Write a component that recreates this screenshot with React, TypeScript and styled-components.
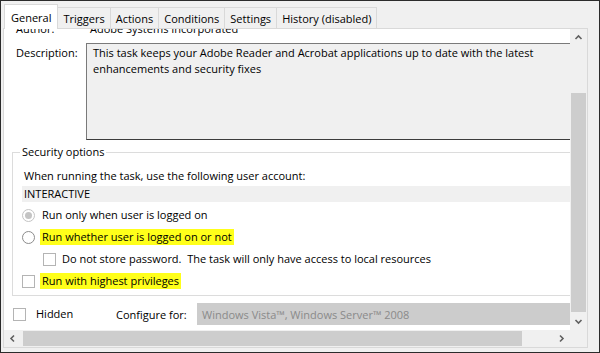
import React from "react";
import styled, { createGlobalStyle } from "styled-components";

const Global = createGlobalStyle`
  html, body { margin: 0; padding: 0; background: #fff; }
  body {
    font-family: "Open Sans", "Noto Sans", sans-serif;
    font-size: 11px;
    color: #000;
  }
  * { box-sizing: border-box; }
`;

const Frame = styled.div`
  width: 600px;
  height: 353px;
  border: 1px solid #2b2b2b;
  background: #f0f0f0;
  padding: 3px 11px 4px 2px;
  display: flex;
  flex-direction: column;
`;

const TabStrip = styled.div`
  height: 25px;
  display: flex;
  align-items: flex-start;
  position: relative;
  z-index: 1;
`;

const Tab = styled.div<{ $active?: boolean }>`
  margin-top: ${(p) => (p.$active ? 0 : 3)}px;
  height: ${(p) => (p.$active ? 25 : 21)}px;
  padding: 0 ${(p) => (p.$active ? 6 : 5)}px;
  margin-left: -1px;
  background: ${(p) => (p.$active ? "#fff" : "#f0f0f0")};
  border: 1px solid #d9d9d9;
  border-bottom: none;
  display: flex;
  align-items: center;
  white-space: nowrap;
  &:first-child { margin-left: 1px; }
`;

const Panel = styled.div`
  flex: 1;
  min-height: 0;
  margin-top: -1px;
  background: #fff;
  border: 1px solid #d9d9d9;
  display: grid;
  grid-template-columns: 1fr 17px;
  grid-template-rows: 1fr 17px;
`;

const Viewport = styled.div`
  overflow: hidden;
  min-width: 0;
  min-height: 0;
`;

const Content = styled.div`
  width: 640px;
  margin-top: -10px;
`;

const FieldRow = styled.div<{ $gap?: number }>`
  display: flex;
  align-items: flex-start;
  padding-left: 12px;
  line-height: 16px;
  margin-top: ${(p) => p.$gap ?? 0}px;
`;

const FieldLabel = styled.div<{ $w: number }>`
  width: ${(p) => p.$w}px;
  flex: none;
  padding-top: 2px;
`;

const FieldValue = styled.div`
  padding-top: 2px;
`;

const TextBox = styled.div`
  width: 520px;
  height: 97px;
  background: #f0f0f0;
  border: 1px solid #7a7a7a;
  border-bottom-color: #3c3c3c;
  padding: 1px 6px;
  line-height: 16px;
`;

const Group = styled.fieldset`
  margin: 4px 0 0 8px;
  width: 620px;
  border: 1px solid #dcdcdc;
  padding: 8px 0 6px 9px;
  line-height: 16px;
`;

const Legend = styled.legend`
  padding: 0 2px;
  margin-left: -2px;
  line-height: 16px;
`;

const AccountLabel = styled.div`
  padding-left: 2px;
`;

const AccountBox = styled.div`
  margin-top: 2px;
  height: 16px;
  background: #f0f0f0;
  padding-left: 2px;
  line-height: 16px;
`;

const Options = styled.div`
  margin-top: 5px;
  display: flex;
  flex-direction: column;
  gap: 6px;
`;

const OptionRow = styled.div<{ $indent?: number }>`
  display: flex;
  align-items: center;
  height: 16px;
  padding-left: ${(p) => p.$indent ?? 0}px;
`;

const Radio = styled.span<{ $disabled?: boolean; $checked?: boolean }>`
  width: 13px;
  height: 13px;
  flex: none;
  border-radius: 50%;
  border: 1px solid ${(p) => (p.$disabled ? "#c4c4c4" : "#8c8c8c")};
  background: #fff;
  display: flex;
  align-items: center;
  justify-content: center;
  &::after {
    content: "";
    display: ${(p) => (p.$checked ? "block" : "none")};
    width: 7px;
    height: 7px;
    border-radius: 50%;
    background: ${(p) => (p.$disabled ? "#c4c4c4" : "#333")};
  }
`;

const Check = styled.span`
  width: 13px;
  height: 13px;
  flex: none;
  border: 1px solid #b4b4b4;
  background: #fff;
`;

const OptionText = styled.span<{ $mark?: boolean; $gap?: number }>`
  margin-left: ${(p) => p.$gap ?? 5}px;
  padding: 0 2px;
  line-height: 16px;
  white-space: nowrap;
  background: ${(p) => (p.$mark ? "#ffff1a" : "transparent")};
`;

const BottomRow = styled.div`
  margin-top: 7px;
  height: 22px;
  display: flex;
  align-items: center;
  padding-left: 9px;
`;

const HiddenCell = styled.div`
  width: 103px;
  flex: none;
  display: flex;
  align-items: center;
`;

const ConfigLabel = styled.span`
  width: 81px;
  flex: none;
`;

const Select = styled.div`
  width: 420px;
  height: 22px;
  background: #cccccc;
  color: #8a8a8a;
  padding-left: 5px;
  display: flex;
  align-items: center;
  white-space: nowrap;
`;

const VScroll = styled.div`
  background: #f0f0f0;
  display: flex;
  flex-direction: column;
`;

const HScroll = styled.div`
  background: #f0f0f0;
  display: flex;
`;

const Arrow = styled.div`
  width: 17px;
  height: 17px;
  flex: none;
  display: flex;
  align-items: center;
  justify-content: center;
`;

const Track = styled.div<{ $dir: "v" | "h" }>`
  flex: 1;
  display: flex;
  flex-direction: ${(p) => (p.$dir === "v" ? "column" : "row")};
  padding: ${(p) => (p.$dir === "v" ? "47px 1px 1px" : "1px 0 1px 2px")};
`;

const Thumb = styled.div<{ $dir: "v" | "h" }>`
  background: #cdcdcd;
  ${(p) => (p.$dir === "v" ? "height: 219px;" : "width: 499px;")}
`;

const Corner = styled.div`
  background: #f0f0f0;
`;

const Chevron = ({ rot }: { rot: number }) => (
  <svg width="9" height="9" viewBox="0 0 9 9" style={{ transform: `rotate(${rot}deg)` }}>
    <path d="M1.5 6 L4.5 3 L7.5 6" fill="none" stroke="#606060" strokeWidth="1.6" />
  </svg>
);

const tabs = ["General", "Triggers", "Actions", "Conditions", "Settings", "History (disabled)"];

export default function App() {
  return (
    <>
      <Global />
      <Frame>
        <TabStrip>
          {tabs.map((t, i) => (
            <Tab key={t} $active={i === 0}>
              {t}
            </Tab>
          ))}
        </TabStrip>
        <Panel>
          <Viewport>
            <Content>
              <FieldRow>
                <FieldLabel $w={74}>Author:</FieldLabel>
                <FieldValue>Adobe Systems Incorporated</FieldValue>
              </FieldRow>
              <FieldRow $gap={6}>
                <FieldLabel $w={70}>Description:</FieldLabel>
                <TextBox>
                  This task keeps your Adobe Reader and Acrobat applications up to date with the latest
                  enhancements and security fixes
                </TextBox>
              </FieldRow>
              <Group>
                <Legend>Security options</Legend>
                <AccountLabel>When running the task, use the following user account:</AccountLabel>
                <AccountBox>INTERACTIVE</AccountBox>
                <Options>
                  <OptionRow>
                    <Radio $disabled $checked />
                    <OptionText>Run only when user is logged on</OptionText>
                  </OptionRow>
                  <OptionRow>
                    <Radio />
                    <OptionText $mark>Run whether user is logged on or not</OptionText>
                  </OptionRow>
                  <OptionRow $indent={21}>
                    <Check />
                    <OptionText $gap={4}>
                      Do not store password.&nbsp; The task will only have access to local resources
                    </OptionText>
                  </OptionRow>
                  <OptionRow>
                    <Check />
                    <OptionText $mark>Run with highest privileges</OptionText>
                  </OptionRow>
                </Options>
              </Group>
              <BottomRow>
                <HiddenCell>
                  <Check />
                  <OptionText $gap={8}>Hidden</OptionText>
                </HiddenCell>
                <ConfigLabel>Configure for:</ConfigLabel>
                <Select>Windows Vista™, Windows Server™ 2008</Select>
              </BottomRow>
            </Content>
          </Viewport>
          <VScroll>
            <Arrow>
              <Chevron rot={0} />
            </Arrow>
            <Track $dir="v">
              <Thumb $dir="v" />
            </Track>
            <Arrow>
              <Chevron rot={180} />
            </Arrow>
          </VScroll>
          <HScroll>
            <Arrow>
              <Chevron rot={-90} />
            </Arrow>
            <Track $dir="h">
              <Thumb $dir="h" />
            </Track>
            <Arrow>
              <Chevron rot={90} />
            </Arrow>
          </HScroll>
          <Corner />
        </Panel>
      </Frame>
    </>
  );
}
